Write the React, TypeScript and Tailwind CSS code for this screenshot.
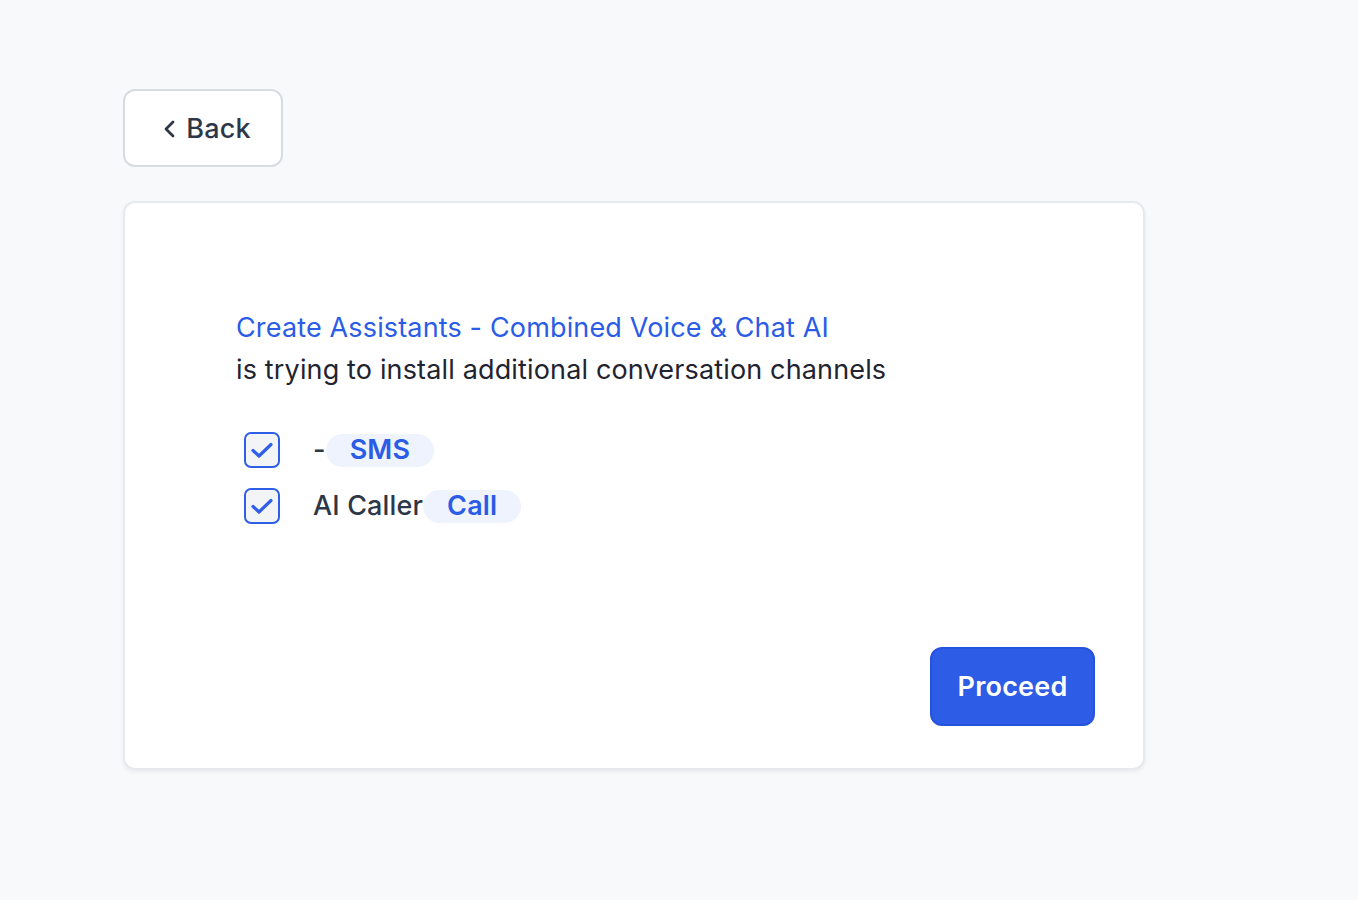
import React from "react";

function Check() {
  return (
    <span className="flex h-[36px] w-[36px] items-center justify-center rounded-[7px] border-2 border-[#2f5fe6] bg-[#f3f4f6]">
      <svg width="28" height="28" viewBox="0 0 28 28" fill="none">
        <path d="M5 14.5l6 5.5L23 8.5" stroke="#2f5fe6" strokeWidth="3.2" strokeLinecap="round" strokeLinejoin="round" />
      </svg>
    </span>
  );
}

export default function App() {
  const channels = [
    { name: "-", tag: "SMS" },
    { name: "AI Caller", tag: "Call" },
  ];
  return (
    <main
      className="min-h-[900px] w-full bg-[#f8f9fb] pl-[123px] pt-[89px]"
      style={{ fontFamily: "Inter, 'Noto Sans', sans-serif" }}
    >
      <button className="flex h-[78px] w-[160px] items-center justify-center gap-[9px] rounded-[12px] border-2 border-[#d9dbe1] bg-white pl-[6px] pt-[2px] text-[27px] font-medium tracking-[0.2px] text-[#2d3748]">
        <svg width="16" height="22" viewBox="0 0 16 22" fill="none">
          <path d="M12 4L5 11l7 7" stroke="#2d3748" strokeWidth="2.8" strokeLinecap="round" strokeLinejoin="round" />
        </svg>
        Back
      </button>

      <div className="mt-[34px] flex h-[569px] w-[1022px] flex-col rounded-[12px] border-2 border-[#e8e9ee] bg-white shadow-[0_2px_4px_rgba(0,0,0,0.06)]">
        <div className="pl-[111px] pt-[104px] tracking-[0.15px]">
          <p className="text-[27px] leading-[42px] text-[#2b5ce6]">
            Create Assistants - Combined Voice &amp; Chat AI
          </p>
          <p className="text-[27px] leading-[42px] text-[#1f2430]">
            is trying to install additional conversation channels
          </p>
          <div className="mt-[41px] flex flex-col gap-[20px] pl-[8px]">
            {channels.map((c) => (
              <div key={c.tag} className="flex h-[36px] items-center">
                <Check />
                <span className="ml-[33px] text-[27px] font-medium text-[#2d3748]">{c.name}</span>
                <span className="flex h-[33px] items-center rounded-full bg-[#eef3fd] px-[24px] text-[27px] font-semibold text-[#2b5ce6]">
                  {c.tag}
                </span>
              </div>
            ))}
          </div>
        </div>
        <div className="mt-auto flex justify-end pb-[42px] pr-[48px]">
          <button className="h-[79px] w-[165px] rounded-[12px] border-2 border-[#2553dd] bg-[#2d5ce6] pt-[1px] text-[27px] font-semibold tracking-[0.2px] text-white">
            Proceed
          </button>
        </div>
      </div>
    </main>
  );
}
